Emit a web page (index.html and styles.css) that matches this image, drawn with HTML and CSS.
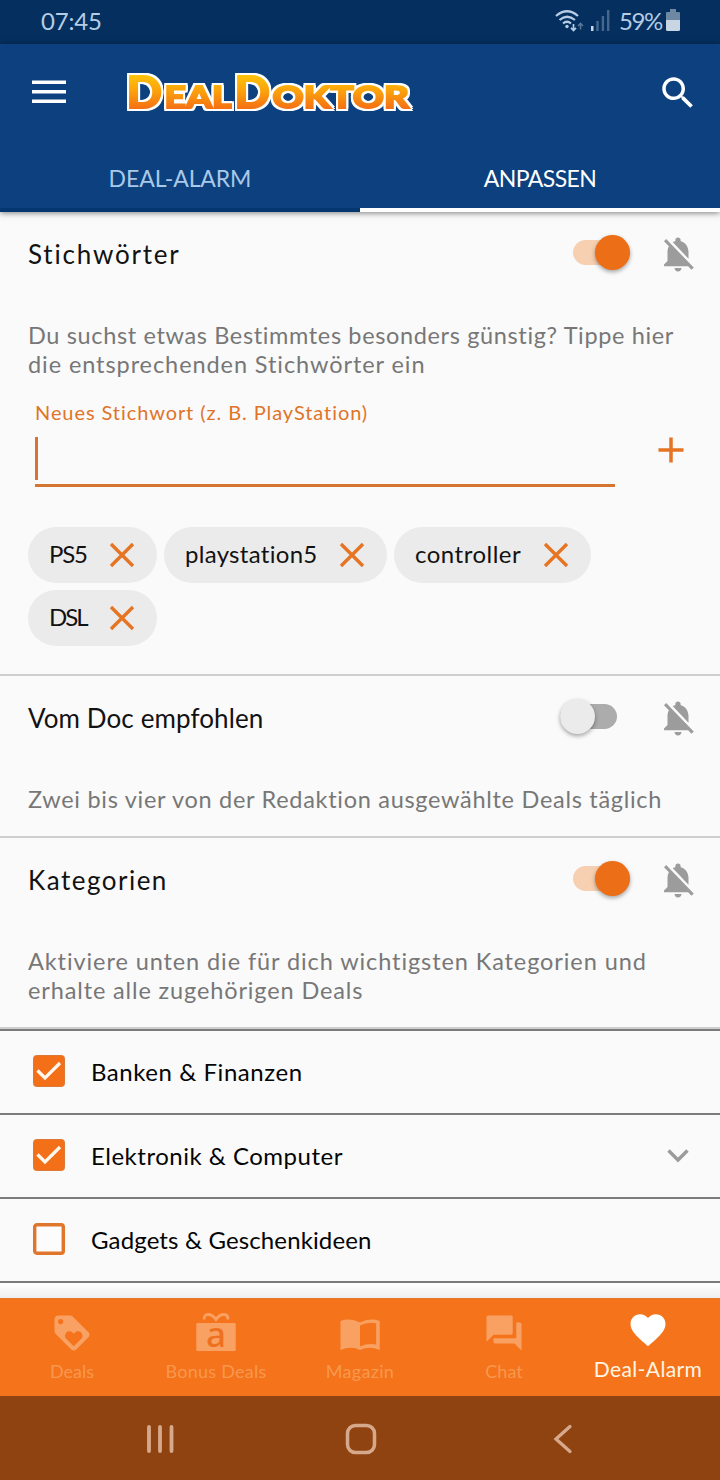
FILE: index.html
```html
<!DOCTYPE html>
<html lang="de">
<head>
<meta charset="utf-8">
<title>DealDoktor – Deal-Alarm</title>
<link rel="stylesheet" href="styles.css">
</head>
<body>
<svg class="defs" width="0" height="0">
  <symbol id="bell-off" viewBox="0 0 24 24"><path d="M20 18.69L7.84 6.14 5.27 3.49 4 4.76l2.8 2.8v.01c-.52.99-.8 2.16-.8 3.42v5l-2 2v1h13.73l2 2L21 19.72l-1-1.03zM12 22c1.11 0 2-.89 2-2h-4c0 1.11.89 2 2 2zm6-7.32V11c0-3.08-1.64-5.64-4.5-6.32V4c0-.83-.67-1.5-1.5-1.5s-1.5.67-1.5 1.5v.68c-.15.03-.29.08-.42.12-.1.03-.2.07-.3.11h-.01c-.01 0-.01 0-.02.01-.23.09-.46.2-.68.31 0 0-.01 0-.01.01L18 14.68z"/></symbol>
  <symbol id="cross" viewBox="0 0 26 26"><path d="M2 2L24 24M24 2L2 24" fill="none" stroke="#e57423" stroke-width="3.3"/></symbol>
  <symbol id="checked" viewBox="0 0 32 32"><rect x=".5" y=".5" width="31" height="31" rx="3" fill="#f37019" stroke="#dc7a35"/><path d="M4.5 15.5L12 23 27 8" fill="none" stroke="#fff8ee" stroke-width="3.2"/></symbol>
  <symbol id="unchecked" viewBox="0 0 32 32"><rect x="1.7" y="1.7" width="28.6" height="28.6" rx="2.2" fill="#fcfcfc" stroke="#df762c" stroke-width="3.4"/></symbol>
</svg>

<div class="statusbar">
  <span class="clock">07:45</span>
  <div class="indicators">
    <svg class="wifi" width="29" height="24" viewBox="0 0 29 24">
      <g fill="none" stroke="#b5cce4" stroke-width="2.2"><path d="M1 7Q12 -2.500 23 7"/><path d="M4.500 11Q12 4.500 20 11"/><path d="M8 14.500Q12 11 16 14.500"/></g>
      <circle cx="12" cy="17.500" r="1.700" fill="#b5cce4"/>
      <path d="M18.500 15v6M16 18.800l2.500 2.700 2.500-2.700" fill="none" stroke="#b5cce4" stroke-width="1.700"/>
      <path d="M25.500 20.500v-6M23 17l2.500-2.700L28 17" fill="none" stroke="#5b7898" stroke-width="1.500"/>
    </svg>
    <svg class="signal" width="19" height="21" viewBox="0 0 19 21"><path d="M0 16h2.500v5H0z" fill="#c6d8ea"/><path d="M5.300 11h2.400v10H5.300zM10.700 6h2.400v15h-2.400zM16 0h2.400v21H16z" fill="#45678c"/></svg>
    <span class="percent">59%</span>
    <svg class="battery" width="14" height="22" viewBox="0 0 14 22"><path d="M4 0h6v3h3q1 0 1 1v7H0V4q0-1 1-1h3z" fill="#6e87a3"/><path d="M0 11h14v9.500q0 1.500-1.500 1.500h-11Q0 22 0 20.500z" fill="#c8d5e2"/></svg>
  </div>
</div>

<header class="appbar">
  <div class="toolbar">
    <svg class="menu" width="34" height="24" viewBox="0 0 34 24"><path d="M0 .5h34V4H0zM0 10h34v3.500H0zM0 19.500h34V23H0z" fill="#fff"/></svg>
    <svg class="logo" width="292" height="50" viewBox="0 0 292 50">
      <defs><linearGradient id="sun" gradientUnits="userSpaceOnUse" x1="0" y1="8" x2="0" y2="42"><stop offset="0" stop-color="#fdc20a"/><stop offset=".45" stop-color="#fba10c"/><stop offset="1" stop-color="#f46c14"/></linearGradient></defs>
      <g class="logo-text" fill="url(#sun)" stroke="url(#sun)">
        <text x="2.500" y="40" font-size="44" textLength="35.500" lengthAdjust="spacingAndGlyphs">D</text>
        <text x="40.500" y="40" font-size="30.500" textLength="67" lengthAdjust="spacingAndGlyphs">EAL</text>
        <text x="110.500" y="40" font-size="44" textLength="35.500" lengthAdjust="spacingAndGlyphs">D</text>
        <text x="148.500" y="40" font-size="30.500" textLength="136.500" lengthAdjust="spacingAndGlyphs">OKTOR</text>
      </g>
    </svg>
    <svg class="search" width="42" height="42" viewBox="0 0 24 24"><path fill="#fff" d="M15.500 14h-.79l-.28-.27C15.410 12.590 16 11.110 16 9.500 16 5.910 13.090 3 9.500 3S3 5.910 3 9.500 5.910 16 9.500 16c1.610 0 3.090-.59 4.230-1.570l.27.28v.79l5 4.990L20.490 19l-4.990-5zm-6 0C7.010 14 5 11.990 5 9.500S7.010 5 9.500 5 14 7.010 14 9.500 11.990 14 9.500 14z"/></svg>
  </div>
  <nav class="tabs">
    <span class="tab"><span class="tab-alarm">DEAL-ALARM</span></span>
    <span class="tab tab-active"><span class="tab-adjust">ANPASSEN</span></span>
  </nav>
</header>

<main class="content">
  <section class="section keywords">
    <div class="section-head">
      <h2 class="title t-keywords">Stichwörter</h2>
      <span class="switch on"><span class="thumb"></span></span>
      <svg class="bell"><use href="#bell-off"/></svg>
    </div>
    <p class="desc"><span class="d1">Du suchst etwas Bestimmtes besonders günstig? Tippe hier</span><br><span class="d2">die entsprechenden Stichwörter ein</span></p>
    <div class="entry">
      <div class="field">
        <label class="field-label">Neues Stichwort (z. B. PlayStation)</label>
        <div class="field-input"><span class="caret"></span></div>
      </div>
      <svg class="plus" width="26" height="26" viewBox="0 0 26 26"><path d="M13 .5v25M.5 13h25" stroke="#e57423" stroke-width="3.500"/></svg>
    </div>
    <div class="chips">
      <span class="chip c-ps5"><span class="chip-text">PS5</span><svg class="x"><use href="#cross"/></svg></span>
      <span class="chip c-play"><span class="chip-text">playstation5</span><svg class="x"><use href="#cross"/></svg></span>
      <span class="chip c-ctrl"><span class="chip-text">controller</span><svg class="x"><use href="#cross"/></svg></span>
      <span class="chip c-ps5 c-dsl"><span class="chip-text">DSL</span><svg class="x"><use href="#cross"/></svg></span>
    </div>
  </section>

  <section class="section">
    <div class="section-head">
      <h2 class="title t-doc">Vom Doc empfohlen</h2>
      <span class="switch off"><span class="thumb"></span></span>
      <svg class="bell"><use href="#bell-off"/></svg>
    </div>
    <p class="desc"><span class="d3">Zwei bis vier von der Redaktion ausgewählte Deals täglich</span></p>
  </section>

  <section class="section">
    <div class="section-head">
      <h2 class="title t-cat">Kategorien</h2>
      <span class="switch on"><span class="thumb"></span></span>
      <svg class="bell"><use href="#bell-off"/></svg>
    </div>
    <p class="desc"><span class="d4">Aktiviere unten die für dich wichtigsten Kategorien und</span><br><span class="d5">erhalte alle zugehörigen Deals</span></p>
  </section>

  <ul class="categories">
    <li class="category"><svg class="box"><use href="#checked"/></svg><span class="cat-1">Banken &amp; Finanzen</span></li>
    <li class="category"><svg class="box"><use href="#checked"/></svg><span class="cat-2">Elektronik &amp; Computer</span>
      <svg class="chevron" width="22" height="14" viewBox="0 0 22 14"><path d="M1.500 1.500L11 11l9.500-9.500" fill="none" stroke="#9b9b9b" stroke-width="3.400"/></svg></li>
    <li class="category"><svg class="box"><use href="#unchecked"/></svg><span class="cat-3">Gadgets &amp; Geschenkideen</span></li>
  </ul>
</main>

<nav class="bottomnav">
  <span class="item"><svg class="nav-icon" viewBox="0 0 24 24"><path d="M21.410 11.580l-9-9C12.050 2.220 11.550 2 11 2H4c-1.100 0-2 .9-2 2v7c0 .55.22 1.050.59 1.420l9 9c.36.36.86.58 1.410.58.55 0 1.050-.22 1.410-.59l7-7c.37-.36.59-.86.59-1.410 0-.55-.23-1.060-.59-1.420zM5.500 7C4.670 7 4 6.330 4 5.500S4.670 4 5.500 4 7 4.670 7 5.500 6.330 7 5.500 7zm11.770 8.270L13 19.540l-4.270-4.270C8.280 14.810 8 14.190 8 13.500c0-1.380 1.120-2.500 2.500-2.500.69 0 1.320.28 1.770.74l.73.72.73-.73c.45-.45 1.080-.73 1.770-.73 1.380 0 2.500 1.120 2.500 2.500 0 .69-.28 1.320-.73 1.770z"/></svg><span class="n1">Deals</span></span>
  <span class="item"><svg class="nav-icon" viewBox="0 0 42 42"><rect x="1.300" y="11" width="39.400" height="28" rx="1"/><path d="M9 7.500Q9 2.500 13 2.500c4 0 6 2 8 5 2-3 4-5 8-5q4 0 4 5" fill="none" stroke="#f8a163" stroke-width="2.800"/><text class="gift-letter" x="21" y="34.500" text-anchor="middle">a</text></svg><span class="n2">Bonus Deals</span></span>
  <span class="item"><svg class="nav-icon" viewBox="0 0 42 42"><path d="M1.500 9Q11 5.500 21 10.500 31 5.500 40.700 9v29Q30 33.500 21 38 12 33.500 1.500 38zM21 13.500V34.500q8-3.500 16.200-2V11.300Q29 9.500 21 13.500z" fill-rule="evenodd"/></svg><span class="n3">Magazin</span></span>
  <span class="item"><svg class="nav-icon" viewBox="0 0 24 24"><path d="M21 6h-2v9H6v2c0 .55.45 1 1 1h11l4 4V7c0-.55-.45-1-1-1zm-4 6V3c0-.55-.45-1-1-1H3c-.55 0-1 .45-1 1v14l4-4h10c.55 0 1-.45 1-1z"/></svg><span class="n4">Chat</span></span>
  <span class="item current"><svg class="nav-icon" viewBox="0 0 24 24"><path d="M12 21.350l-1.450-1.320C5.400 15.360 2 12.280 2 8.500 2 5.420 4.420 3 7.500 3c1.740 0 3.410.81 4.500 2.090C13.090 3.810 14.760 3 16.500 3 19.580 3 22 5.420 22 8.500c0 3.780-3.400 6.860-8.550 11.540L12 21.350z"/></svg><span class="n5">Deal-Alarm</span></span>
</nav>

<div class="sysbar">
  <svg width="28" height="30" viewBox="0 0 28 30"><path d="M3 3v24M14 3v24M25.500 3v24" stroke="#d7a98c" stroke-width="3.800" stroke-linecap="round"/></svg>
  <svg class="home" width="32" height="32" viewBox="0 0 32 32"><rect x="2.500" y="2.500" width="27" height="27" rx="8" fill="none" stroke="#d7a98c" stroke-width="3.500"/></svg>
  <svg width="20" height="30" viewBox="0 0 20 30"><path d="M17 2.500L3 15l14 12.500" fill="none" stroke="#d7a98c" stroke-width="3.300" stroke-linecap="round"/></svg>
</div>
</body>
</html>
```
FILE: styles.css
```css
* { box-sizing: border-box; }
body {
  margin: 0;
  width: 720px;
  height: 1480px;
  overflow: hidden;
  display: flex;
  flex-direction: column;
  background: #fafafa;
  color: #121212;
  font-family: Lato, "Open Sans", sans-serif;
  font-size: 24px;
  white-space: nowrap;
}
svg { display: block; flex: none; }
.defs { display: none; }

.statusbar {
  height: 44px;
  flex: none;
  display: flex;
  justify-content: space-between;
  align-items: center;
  padding: 0 40px 0 41px;
  background: #042f5f;
  color: #b5cce4;
}
.clock { font-size: 24px; letter-spacing: -.2px; padding-bottom: 3px; }
.indicators { display: flex; align-items: center; }
.wifi { margin: -2px 7px 0 0; }
.signal { margin: -3px 9px 0 0; }
.percent { font-size: 24px; letter-spacing: -1.400px; width: 45px; margin-right: 2px; padding-bottom: 3px; }
.battery { margin-top: -4px; }

.appbar {
  height: 168px;
  flex: none;
  display: flex;
  flex-direction: column;
  justify-content: space-between;
  background: #0c407e;
  box-shadow: 0 1px 6px rgba(0, 0, 0, .5);
  z-index: 1;
}
.toolbar { height: 97px; display: flex; align-items: center; padding: 0 21px 0 32px; }
.logo {
  margin-left: 58px;
  overflow: visible;
  filter: drop-shadow(2px 0 0 #fff) drop-shadow(-2px 0 0 #fff) drop-shadow(0 2px 0 #fff) drop-shadow(0 -2px 0 #fff);
}
.logo-text {
  font-family: Lato, sans-serif;
  font-weight: 900;
  stroke-width: 1.800px;
  stroke-linejoin: miter;
}
.search { margin-left: auto; }
.menu { margin-top: -2px; }
.tabs { display: flex; height: 66px; }
.tab {
  width: 50%;
  display: flex;
  justify-content: center;
  align-items: center;
  padding-top: 2px;
  border-bottom: 4px solid #043770;
  color: #a9c9e8;
  font-size: 23px;
}
.tab-active { color: #fff; border-color: #fff; }

.content { flex: 1; background: linear-gradient(#fafafa 98.600%, #fff 98.700%, #eee); }
.section { border-bottom: 2px solid #cecece; padding: 0 21px 22px 28px; }
.keywords { padding-bottom: 28px; }
.section-head { height: 84px; display: flex; align-items: center; }
.title { margin: 0; font-weight: 400; font-size: 26px; }
.bell { width: 42px; height: 42px; fill: #9c9c9c; }
.switch {
  width: 57px;
  height: 25px;
  margin: -3px 27px 0 auto;
  display: flex;
  align-items: center;
  border-radius: 13px;
}
.thumb { width: 35px; height: 35px; flex: none; border-radius: 50%; box-shadow: 0 2px 4px rgba(0, 0, 0, .35); }
.on { justify-content: flex-end; background: #f7d0b2; }
.on .thumb { background: #ec6e17; }
.off { margin-right: 40px; background: #acacac; }
.off .thumb { background: #ebebeb; }
.desc { margin: 25px 0 0; font-size: 23.500px; line-height: 29px; color: #777; }

.entry { display: flex; align-items: center; justify-content: space-between; padding: 21px 15px 0 7px; }
.field { width: 580px; }
.field-label { display: block; height: 24px; line-height: 24px; font-size: 20px; color: #df7429; }
.field-input { height: 63px; padding-top: 13px; border-bottom: 3px solid #d57532; }
.caret { display: block; width: 3px; height: 43px; background: #d57532; }
.plus { margin-top: 12px; }

.chips { display: flex; flex-wrap: wrap; gap: 7px; margin-top: 40px; }
.chip {
  height: 56px;
  display: flex;
  justify-content: space-between;
  align-items: center;
  padding: 0 22px 0 21px;
  border-radius: 28px;
  background: #ebebeb;
}
.chip-text { padding-bottom: 3px; }
.x { width: 26px; height: 26px; }
.c-ps5 { width: 129px; letter-spacing: -1.200px; }
.c-dsl { letter-spacing: -2px; }
.c-play { width: 223px; letter-spacing: .3px; }
.c-ctrl { width: 197px; letter-spacing: .5px; }

.categories { margin: 0; padding: 0; list-style: none; border-top: 2px solid #7b7b7b; color: #050505; }
.category {
  height: 84px;
  display: flex;
  align-items: center;
  padding: 0 31px 0 33px;
  border-bottom: 2px solid #7b7b7b;
}
.category span { padding-bottom: 2px; }
.box { width: 32px; height: 32px; margin: -2px 26px 0 0; }
.chevron { margin-left: auto; }

.bottomnav { height: 98px; flex: none; display: flex; background: #f5731b; border-top: 1px solid #e0782d; }
.item {
  width: 144px;
  display: flex;
  flex-direction: column;
  align-items: center;
  padding-top: 13px;
  font-size: 18px;
  line-height: 22px;
  color: #f8984f;
}
.nav-icon { width: 42px; height: 42px; margin-bottom: 6px; fill: #f8a163; overflow: visible; }
.gift-letter { font-family: "Noto Sans", sans-serif; font-size: 35px; font-weight: 500; fill: #ef701e; }
.current { padding-top: 10px; font-size: 21px; color: #fff6e4; }
.current .nav-icon { fill: #fff; margin-bottom: 7px; }

.sysbar {
  height: 84px;
  flex: none;
  display: flex;
  align-items: center;
  justify-content: space-between;
  padding: 2px 147px 0 146px;
  background: #8f4310;
}
.home { margin-right: 6px; }

.tab-alarm { letter-spacing: -.1px; }
.tab-adjust { letter-spacing: -.600px; }
.t-keywords { letter-spacing: 1.800px; }
.t-doc { letter-spacing: .1px; }
.t-cat { letter-spacing: 1.500px; }
.d1 { letter-spacing: .64px; }
.d2 { letter-spacing: .92px; }
.d3 { letter-spacing: .71px; }
.d4 { letter-spacing: .91px; }
.d5 { letter-spacing: .87px; }
.field-label { letter-spacing: .92px; }
.cat-1 { letter-spacing: .55px; }
.cat-2 { letter-spacing: .5px; }
.cat-3 { letter-spacing: .13px; }
.n2 { letter-spacing: .25px; }
.n3 { letter-spacing: .3px; }
.n5 { letter-spacing: .4px; }
```
